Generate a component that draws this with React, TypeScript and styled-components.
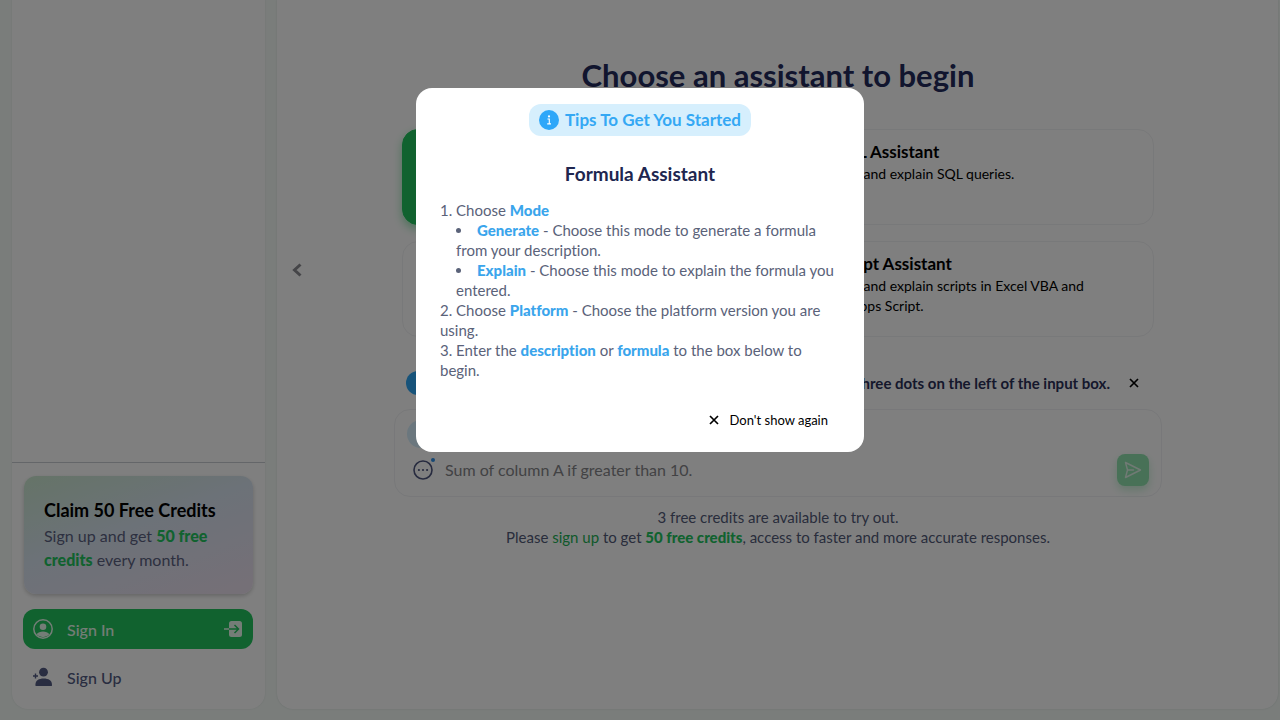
import React from "react";
import styled, { createGlobalStyle } from "styled-components";

const GlobalStyle = createGlobalStyle`
  * { box-sizing: border-box; }
  body {
    margin: 0;
    background: #f5faf7;
    color: #5a6180;
    font-family: Lato, "Noto Sans", sans-serif;
    font-size: 15px;
    font-variant-ligatures: none;
    line-height: 20px;
  }
  h1, h2, h3, p, ol, ul { margin: 0; padding: 0; }
  button, input { font-family: inherit; }
  svg { flex: none; display: block; }
`;

const Page = styled.div`
  display: grid;
  grid-template-columns: 253px minmax(0, 1fr);
  gap: 12px;
  min-height: 100vh;
  padding: 0 2px 11px 12px;
`;

const Sidebar = styled.aside`
  display: flex;
  flex-direction: column;
  justify-content: flex-end;
  background: #fff;
  border-radius: 0 0 16px 16px;
  box-shadow: 0 0 2px rgba(30, 80, 60, 0.12);
`;

const SidebarFooter = styled.div`
  display: flex;
  flex-direction: column;
  gap: 8px;
  padding: 13px 12px 12px 11px;
  border-top: 1px solid #c9cdd2;
`;

const Promo = styled.section`
  height: 118px;
  margin: 0 0 7px 1px;
  padding: 22px 20px;
  border-radius: 12px;
  background: linear-gradient(160deg, #cbe8d0 0%, #d9e4f1 45%, #ebe0ef 95%);
  box-shadow: 0 2px 4px rgba(0, 0, 0, 0.2);
  font-size: 16px;
  line-height: 24px;
`;

const PromoTitle = styled.h3`
  margin-bottom: 2px;
  color: #000;
  font-size: 18px;
  font-weight: 700;
  line-height: 24px;
`;

const Green = styled.strong`
  color: #22c55e;
  font-weight: 900;
`;

const NavButton = styled.button<{ $primary?: boolean }>`
  display: flex;
  align-items: center;
  gap: 12px;
  width: 100%;
  height: 40px;
  padding: 0 8px;
  border: 0;
  border-radius: 12px;
  background: ${(p) => (p.$primary ? "#22c55e" : "transparent")};
  color: ${(p) => (p.$primary ? "#e9fbef" : "#525a82")};
  font-size: 16px;
  font-weight: 500;
  cursor: pointer;
`;

const NavLabel = styled.span`
  flex: 1;
  text-align: left;
`;

const Main = styled.main`
  display: flex;
  align-items: flex-start;
  background: #fff;
  border-radius: 0 0 16px 16px;
  box-shadow: 0 0 2px rgba(30, 80, 60, 0.16);
  padding-top: 55px;
`;

const Collapse = styled.button`
  flex: none;
  display: flex;
  width: 24px;
  height: 24px;
  margin: 203px 0 0 9px;
  padding: 5px 6px;
  border: 0;
  background: none;
  color: #8b8b90;
  cursor: pointer;
`;

const Content = styled.div`
  flex: 1;
  display: flex;
  flex-direction: column;
  width: 100%;
  max-width: 768px;
  min-width: 0;
  margin: 0 auto;
`;

const Balance = styled.div`
  flex: none;
  width: 32px;
`;

const Heading = styled.h1`
  color: #232a5c;
  font-size: 31px;
  font-weight: 700;
  line-height: 40px;
  text-align: center;
`;

const Cards = styled.div`
  display: grid;
  grid-template-columns: repeat(2, minmax(0, 1fr));
  gap: 16px;
  margin: 34px 8px 0;
`;

const Card = styled.button<{ $active?: boolean }>`
  display: flex;
  flex-direction: column;
  min-height: 96px;
  padding: 10px 32px 10px 16px;
  border: 1px solid ${(p) => (p.$active ? "#22c55e" : "#f1f2f4")};
  border-radius: 16px;
  background: ${(p) => (p.$active ? "#22c55e" : "#fff")};
  box-shadow: ${(p) => (p.$active ? "0 4px 10px rgba(34, 197, 94, 0.45)" : "none")};
  color: ${(p) => (p.$active ? "#fff" : "#000")};
  font-size: 14px;
  line-height: 20px;
  text-align: left;
  cursor: pointer;
`;

const CardTitle = styled.span`
  display: flex;
  align-items: center;
  gap: 8px;
  font-size: 17px;
  font-weight: 700;
  line-height: 24px;
`;

const Notice = styled.div`
  display: flex;
  align-items: center;
  gap: 12px;
  margin: 34px 16px 0 12px;
  color: #2b3058;
  font-weight: 700;
`;

const NoticeText = styled.span`
  flex: 1;
  text-align: right;
  white-space: nowrap;
`;

const Tag = styled.span`
  display: grid;
  place-items: center;
  width: 48px;
  height: 24px;
  border-radius: 12px;
  background: #2ea7f5;
  color: #fff;
`;

const IconButton = styled.button`
  display: grid;
  place-items: center;
  width: 24px;
  height: 24px;
  padding: 0;
  border: 0;
  background: none;
  color: #000;
  cursor: pointer;
`;

const Composer = styled.form`
  display: flex;
  flex-direction: column;
  gap: 6px;
  margin-top: 14px;
  padding: 10px 12px;
  border: 1px solid #f0f1f4;
  border-radius: 16px;
`;

const Mode = styled.button`
  align-self: flex-start;
  height: 28px;
  padding: 0 16px;
  border: 0;
  border-radius: 14px;
  background: #d6effd;
  color: #2ea7f5;
  font-size: 15px;
  font-weight: 700;
`;

const InputRow = styled.div`
  display: flex;
  align-items: center;
  gap: 10px;
  padding-left: 4px;
`;

const MoreButton = styled(IconButton)`
  position: relative;
  color: #4e567f;
`;

const Dot = styled.span`
  position: absolute;
  top: 0;
  right: 0;
  width: 4px;
  height: 4px;
  border-radius: 50%;
  background: #2e90e8;
`;

const Prompt = styled.input`
  flex: 1;
  min-width: 0;
  padding: 0;
  border: 0;
  outline: 0;
  background: none;
  font-size: 16px;
  line-height: 24px;
  &::placeholder { color: #858589; opacity: 1; }
`;

const Send = styled.button`
  display: grid;
  place-items: center;
  width: 32px;
  height: 32px;
  padding: 0;
  border: 0;
  border-radius: 8px;
  background: #90e2ae;
  box-shadow: 0 4px 8px rgba(34, 197, 94, 0.25);
  color: #e3f5ea;
`;

const Credits = styled.p`
  margin-top: 10px;
  color: #525a78;
  text-align: center;
`;

const Link = styled.a`
  color: #22b155;
  text-decoration: none;
`;

const Overlay = styled.div`
  position: fixed;
  inset: 0;
  display: flex;
  align-items: flex-start;
  justify-content: center;
  padding-top: 88px;
  background: rgba(0, 0, 0, 0.5);
`;

const Dialog = styled.section`
  display: flex;
  flex-direction: column;
  width: 448px;
  max-width: 100%;
  padding: 16px 24px;
  border-radius: 16px;
  background: #fff;
`;

const Badge = styled.div`
  align-self: center;
  display: flex;
  align-items: center;
  gap: 6px;
  height: 32px;
  padding: 0 10px;
  border-radius: 12px;
  background: #d6effd;
  color: #34a8f4;
  font-size: 17px;
  font-weight: 700;
`;

const DialogTitle = styled.h2`
  margin: 26px 0 14px;
  color: #20264f;
  font-size: 19px;
  font-weight: 700;
  line-height: 24px;
  text-align: center;
`;

const Steps = styled.ol`
  color: #5a6279;
  list-style: none;
`;

const Options = styled.ul`
  padding-left: 16px;
  list-style: disc inside;
`;

const Key = styled.strong`
  color: #3aa5ec;
  font-weight: 900;
`;

const Dismiss = styled.button`
  align-self: flex-end;
  display: flex;
  align-items: center;
  gap: 10px;
  height: 32px;
  margin-top: 24px;
  padding: 0 12px;
  border: 0;
  background: none;
  color: #000;
  font-size: 13px;
  cursor: pointer;
`;

const Cross = () => (
  <svg width="12" height="12" viewBox="0 0 12 12" stroke="currentColor" strokeWidth="1.7" aria-hidden="true">
    <path d="M2 2l8 8M10 2l-8 8" />
  </svg>
);

const InfoIcon = () => (
  <svg width="20" height="20" viewBox="0 0 20 20" aria-hidden="true">
    <circle cx="10" cy="10" r="10" fill="#2ea7f9" />
    <circle cx="10" cy="6.4" r="1.1" fill="#fff" />
    <path d="M8.5 9h1.8v4.8M8.2 13.9h3.8" stroke="#fff" strokeWidth="1.1" fill="none" />
  </svg>
);

const AccountIcon = () => (
  <svg width="24" height="24" viewBox="0 0 24 24" fill="none" aria-hidden="true">
    <circle cx="12" cy="12" r="9.2" stroke="currentColor" strokeWidth="1.5" />
    <circle cx="12" cy="9.8" r="3.3" fill="currentColor" />
    <path d="M5.6 17.3c1.5-2 3.7-2.9 6.4-2.9s4.9.9 6.4 2.9a8.4 8.4 0 0 1-12.8 0z" fill="currentColor" />
  </svg>
);

const EnterIcon = () => (
  <svg width="24" height="24" viewBox="0 0 24 24" fill="none" aria-hidden="true">
    <rect x="8" y="4" width="13" height="16" rx="2.5" fill="currentColor" />
    <path d="M3 12h5" stroke="currentColor" strokeWidth="1.5" />
    <path d="M8 12h9.5M13.5 8l4 4-4 4" stroke="#22c55e" strokeWidth="1.5" />
  </svg>
);

const AddPersonIcon = () => (
  <svg width="24" height="24" viewBox="0 0 24 24" fill="currentColor" aria-hidden="true">
    <circle cx="12.5" cy="7.2" r="4.4" />
    <path d="M4.500 21v-1.800c0-3.700 3.300-5.800 8.200-5.800s8.200 2.100 8.200 5.800V21z" />
    <path d="M2 11h5M4.500 8.500v5" stroke="currentColor" strokeWidth="1.400" />
  </svg>
);

const MoreIcon = () => (
  <svg width="20" height="20" viewBox="0 0 20 20" aria-hidden="true">
    <circle cx="10" cy="10" r="9" fill="none" stroke="currentColor" strokeWidth="1.6" />
    <g fill="currentColor">
      <circle cx="5.9" cy="10" r="1.1" />
      <circle cx="10" cy="10" r="1.1" />
      <circle cx="14.1" cy="10" r="1.1" />
    </g>
  </svg>
);

const SendIcon = () => (
  <svg width="18" height="18" viewBox="0 0 18 18" fill="none" stroke="currentColor" strokeWidth="1.4" strokeLinejoin="round" strokeLinecap="round" aria-hidden="true">
    <path d="M1.5 1.5 16.5 9 1.5 16.5 3.5 9zM3.5 9h6" />
  </svg>
);

const ChevronIcon = () => (
  <svg width="10" height="14" viewBox="0 0 10 14" fill="none" stroke="currentColor" strokeWidth="3" aria-hidden="true">
    <path d="M8.5 1.5 2.5 7l6 5.5" />
  </svg>
);

const TableIcon = () => (
  <svg width="24" height="24" viewBox="0 0 24 24" fill="none" stroke="currentColor" strokeWidth="2" aria-hidden="true">
    <rect x="4" y="4" width="16" height="16" rx="2" />
    <path d="M4 10h16M10 4v16" />
  </svg>
);

const assistants = [
  { name: "Formula Assistant", text: "Generate and explain formulas.", active: true },
  { name: "SQL Assistant", text: "Generate and explain SQL queries." },
  { name: "Regex Assistant", text: "Generate and explain regex." },
  { name: "Script Assistant", text: "Generate and explain scripts in Excel VBA and Google Apps Script." },
];

export default function App() {
  return (
    <>
      <GlobalStyle />
      <Page>
        <Sidebar>
          <SidebarFooter>
            <Promo>
              <PromoTitle>Claim 50 Free Credits</PromoTitle>
              <p>Sign up and get <Green>50 free credits</Green> every month.</p>
            </Promo>
            <NavButton type="button" $primary>
              <AccountIcon />
              <NavLabel>Sign In</NavLabel>
              <EnterIcon />
            </NavButton>
            <NavButton type="button">
              <AddPersonIcon />
              <NavLabel>Sign Up</NavLabel>
            </NavButton>
          </SidebarFooter>
        </Sidebar>
        <Main>
          <Collapse type="button" aria-label="Collapse sidebar"><ChevronIcon /></Collapse>
          <Content>
            <Heading>Choose an assistant to begin</Heading>
            <Cards>
              {assistants.map((a) => (
                <Card key={a.name} type="button" $active={a.active}>
                  <CardTitle><TableIcon />{a.name}</CardTitle>
                  <span>{a.text}</span>
                </Card>
              ))}
            </Cards>
            <Notice>
              <Tag>Tips</Tag>
              <NoticeText>Find more options by clicking the three dots on the left of the input box.</NoticeText>
              <IconButton type="button" aria-label="Close tip"><Cross /></IconButton>
            </Notice>
            <Composer>
              <Mode type="button">Generate</Mode>
              <InputRow>
                <MoreButton type="button" aria-label="More options"><MoreIcon /><Dot /></MoreButton>
                <Prompt aria-label="Description" placeholder="Sum of column A if greater than 10." />
                <Send type="button" aria-label="Send"><SendIcon /></Send>
              </InputRow>
            </Composer>
            <Credits>
              3 free credits are available to try out.<br />
              Please <Link href="#signup">sign up</Link> to get <Green>50 free credits</Green>, access to faster and more accurate responses.
            </Credits>
          </Content>
          <Balance />
        </Main>
      </Page>
      <Overlay>
        <Dialog role="dialog" aria-labelledby="tips-title">
          <Badge><InfoIcon />Tips To Get You Started</Badge>
          <DialogTitle id="tips-title">Formula Assistant</DialogTitle>
          <Steps>
            <li>
              1. Choose <Key>Mode</Key>
              <Options>
                <li><Key>Generate</Key> - Choose this mode to generate a formula from your description.</li>
                <li><Key>Explain</Key> - Choose this mode to explain the formula you entered.</li>
              </Options>
            </li>
            <li>2. Choose <Key>Platform</Key> - Choose the platform version you are using.</li>
            <li>3. Enter the <Key>description</Key> or <Key>formula</Key> to the box below to begin.</li>
          </Steps>
          <Dismiss type="button"><Cross />Don't show again</Dismiss>
        </Dialog>
      </Overlay>
    </>
  );
}
